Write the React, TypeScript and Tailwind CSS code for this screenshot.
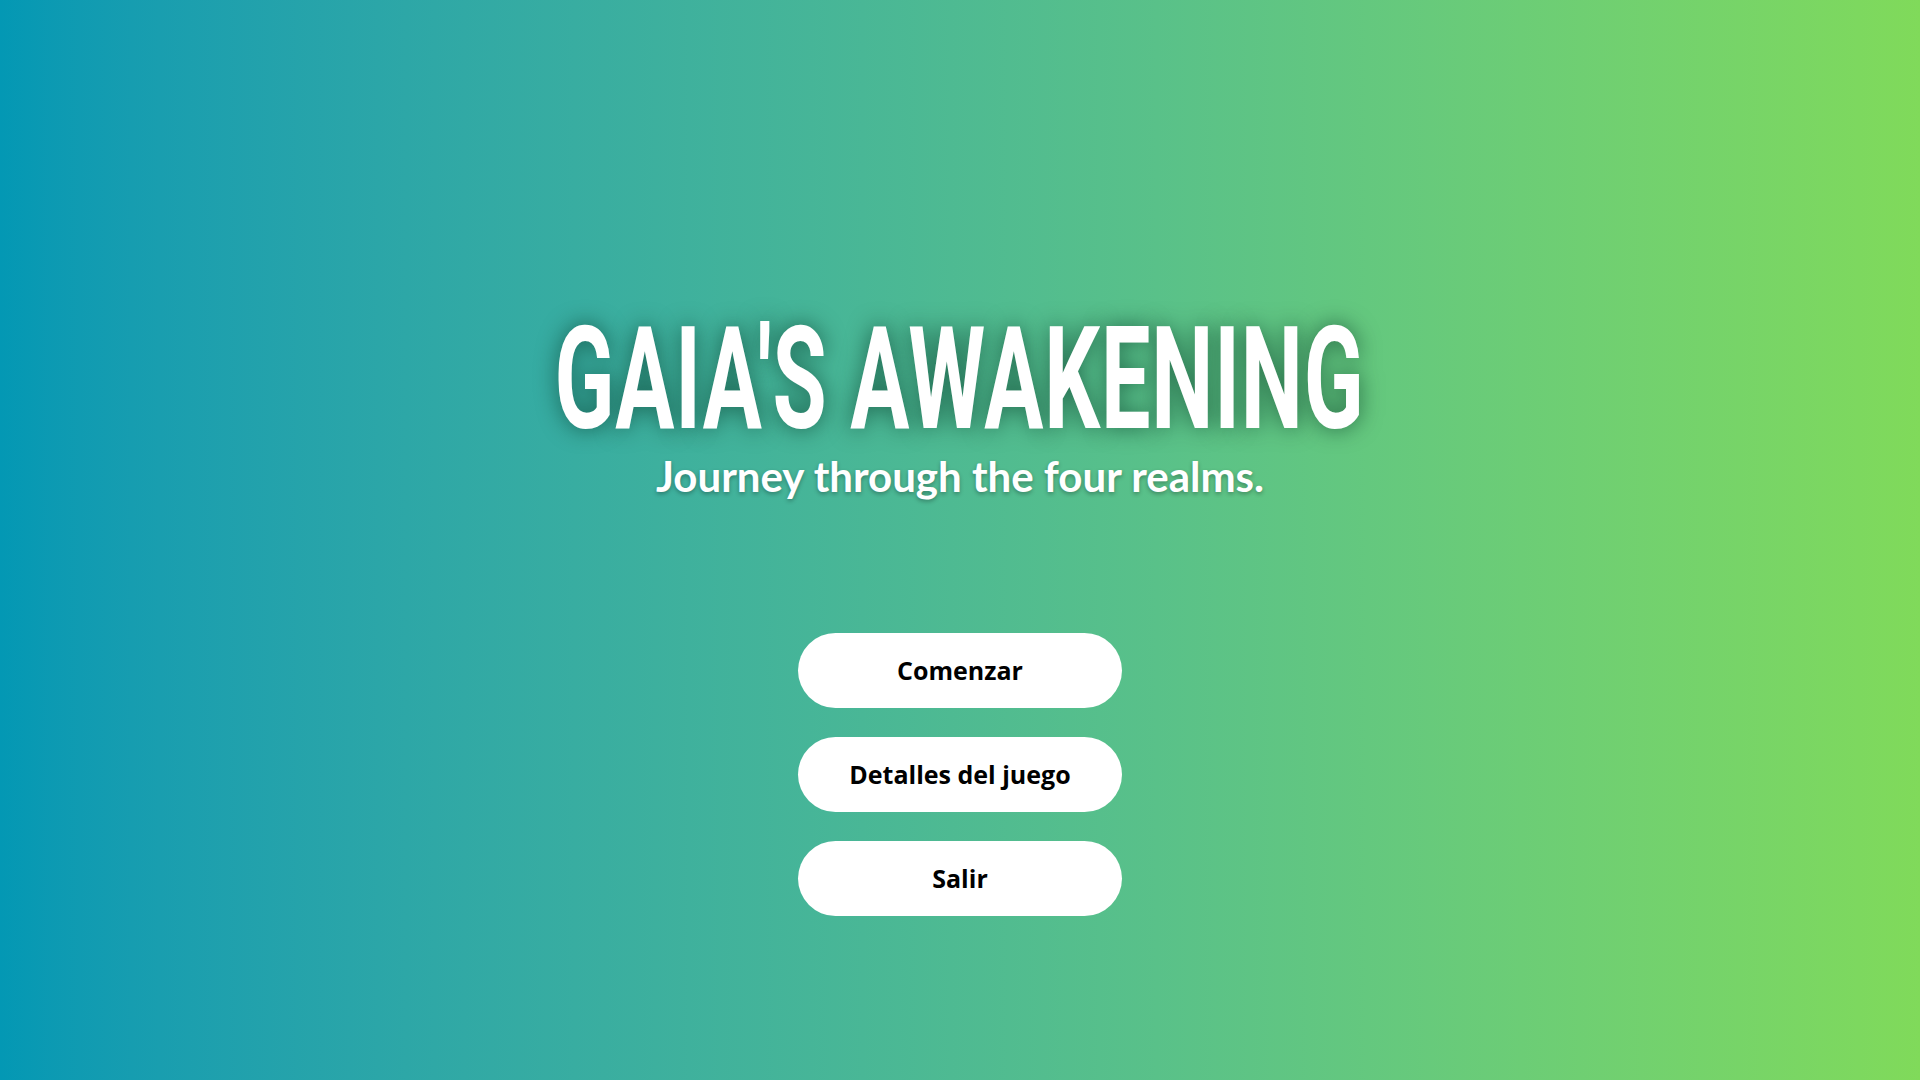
import React, { useLayoutEffect, useRef, useState } from "react";

export default function App() {
  const ref = useRef<HTMLHeadingElement>(null);
  const [sx, setSx] = useState(0.56);
  useLayoutEffect(() => {
    if (ref.current) {
      const w = ref.current.offsetWidth;
      if (w > 0) setSx(810 / w);
    }
  }, []);
  return (
    <div className="w-full h-[1080px] overflow-hidden bg-gradient-to-r from-[#0398b4] to-[#80da5a] flex flex-col items-center pt-[308px]">
      <h1
        ref={ref}
        className="font-['Roboto',sans-serif] font-bold text-[143px] leading-none text-white whitespace-nowrap tracking-[0.01em] [text-shadow:0_0_28px_rgba(0,45,30,0.6)]"
        style={{ transform: `scaleX(${sx})` }}
      >
        GAIA'S AWAKENING
      </h1>
      <p className="font-['Lato',sans-serif] font-bold text-[42px] leading-[1.2] text-white [text-shadow:0_2px_4px_rgba(0,0,0,0.3)]">
        Journey through the four realms.
      </p>
      <div className="mt-[132px] flex flex-col gap-[29px]">
        {["Comenzar", "Detalles del juego", "Salir"].map((t) => (
          <button
            key={t}
            className="w-[324px] h-[75px] rounded-full bg-white text-black font-['Open_Sans',sans-serif] font-bold text-[25px]"
          >
            {t}
          </button>
        ))}
      </div>
    </div>
  );
}
